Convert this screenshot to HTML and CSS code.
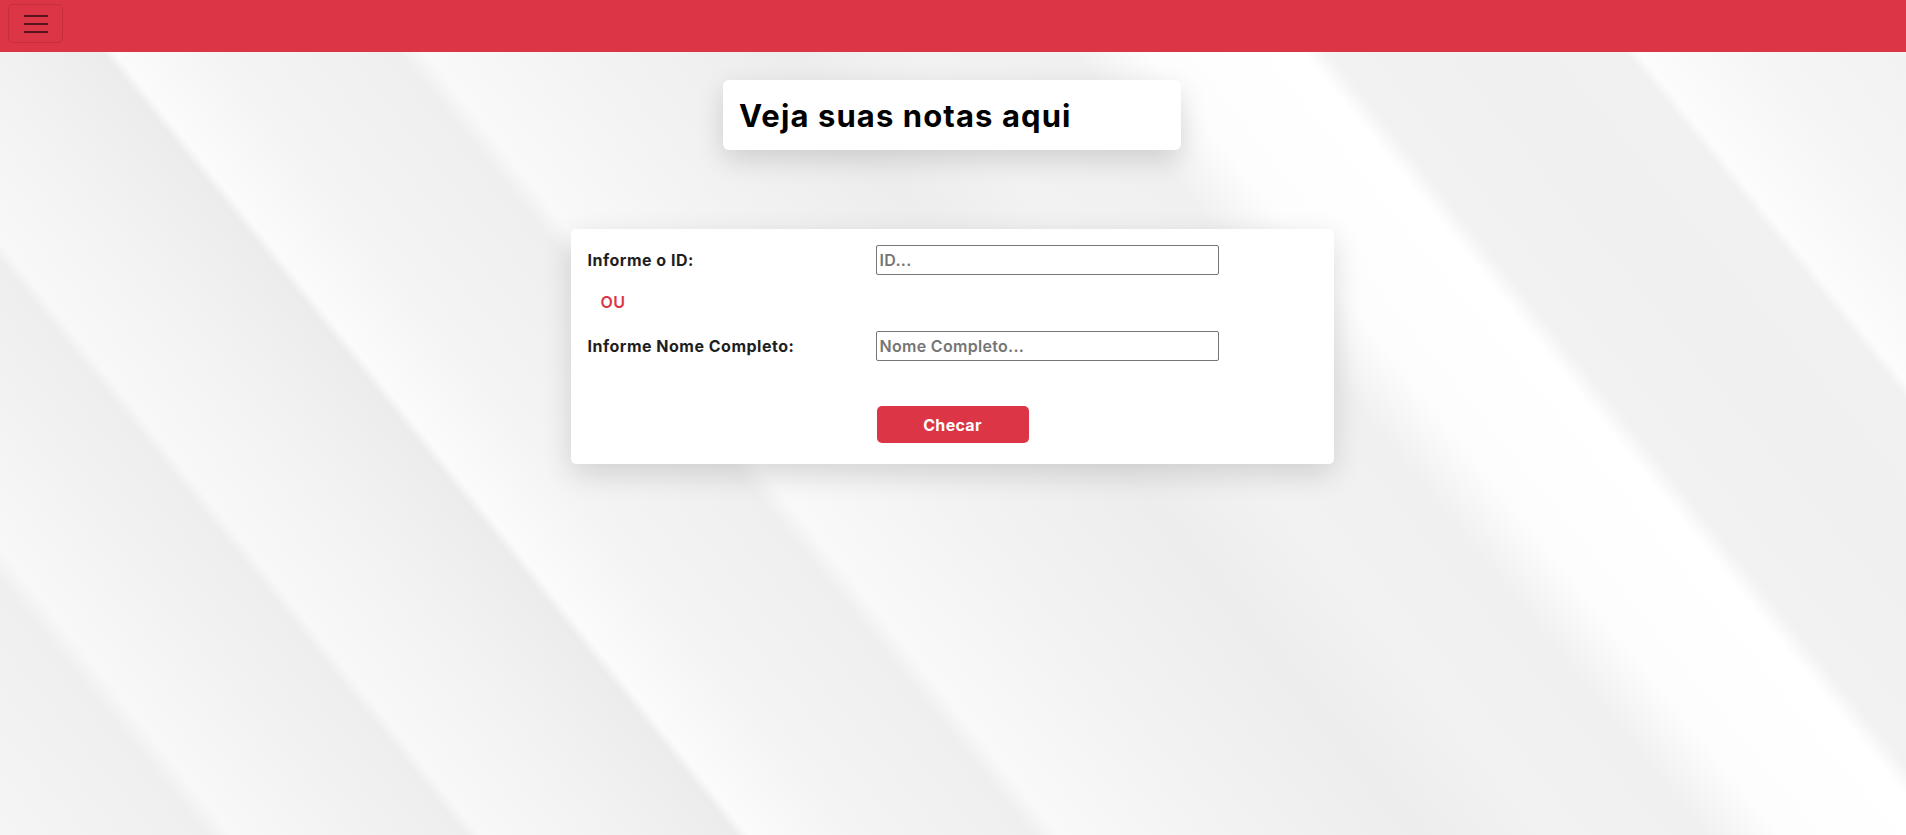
FILE: index.html
```html
<!DOCTYPE html>
<html lang="pt-BR">
<head>
<meta charset="utf-8">
<title>Notas</title>
<link rel="stylesheet" href="styles.css">
</head>
<body>
<nav class="navbar">
  <button class="toggler" type="button" aria-label="Menu">
    <svg class="toggler-icon" width="30" height="30" viewBox="0 0 30 30">
      <path d="M3 7h24M3 15h24M3 23h24" stroke="rgba(0,0,0,0.6)" stroke-width="2" fill="none"/>
    </svg>
  </button>
</nav>
<main class="page">
  <div class="title-card">
    <h1>Veja suas notas aqui</h1>
  </div>
  <form class="form-card">
    <div class="row">
      <label class="label" for="id">Informe o ID:</label>
      <input class="field" id="id" type="text" placeholder="ID...">
    </div>
    <div class="or">OU</div>
    <div class="row">
      <label class="label" for="nome">Informe Nome Completo:</label>
      <input class="field" id="nome" type="text" placeholder="Nome Completo...">
    </div>
    <div class="row actions">
      <span></span>
      <button class="btn" type="button">Checar</button>
    </div>
  </form>
</main>
</body>
</html>
```
FILE: styles.css
```css
* { box-sizing: border-box; }
html, body { margin: 0; }
body {
  font-family: Inter, "Noto Sans", "Liberation Sans", sans-serif;
  color: #212529;
  min-height: 835px;
  background-color: #f3f3f3;
  background-image: linear-gradient(51deg,
    #f5f5f5 0%, #efefef 8%, #f8f8f8 9%, #f2f2f2 14%,
    #eeeeee 18%, #f8f8f8 18.6%, #f2f2f2 24%,
    #ececec 28.5%, #fbfbfb 29%, #f4f4f4 33%,
    #efefef 40%, #f9f9f9 41%, #f3f3f3 47%,
    #ededed 55%, #f2f2f2 60%, #f0f0f0 66%,
    #fdfdfd 69%, #ffffff 75%, #f2f2f2 76%,
    #f0f0f0 82%, #f1f1f1 87.5%, #fcfcfc 88%,
    #f5f5f5 93%, #f1f1f1 100%);
  background-size: 1906px 835px;
  background-repeat: no-repeat;
}
.navbar {
  height: 52px;
  background: #dc3545;
  display: flex;
  align-items: flex-start;
  padding: 4px 8px;
}
.toggler {
  width: 55px;
  height: 39px;
  padding: 0;
  background: transparent;
  border: 1px solid rgba(0,0,0,0.1);
  border-radius: 5px;
  display: flex;
  align-items: center;
  justify-content: center;
}
.toggler-icon { display: block; }
.page {
  display: flex;
  flex-direction: column;
  align-items: center;
  padding-top: 28px;
}
.title-card {
  width: 458px;
  height: 70px;
  background: #fff;
  border-radius: 6px;
  box-shadow: 0 10px 28px rgba(0,0,0,0.14);
  padding: 0 16px;
  display: flex;
  align-items: center;
  transform: translateX(-1px);
}
.title-card h1 {
  margin: 0;
  font-size: 31px;
  font-weight: 700;
  color: #000;
  letter-spacing: 1.1px;
}
.form-card {
  margin-top: 79px;
  width: 763px;
  background: #fff;
  border-radius: 5px;
  box-shadow: 0 10px 30px rgba(0,0,0,0.14);
  padding: 16px 17px 21px;
  display: flex;
  flex-direction: column;
  transform: translateX(-1px);
}
.row {
  display: grid;
  grid-template-columns: 288px 343px;
  align-items: center;
}
.label {
  font-size: 16px;
  font-weight: 700;
  color: #1e1e1e;
  letter-spacing: 0.5px;
}
.field {
  height: 30px;
  border: 1px solid #767676;
  border-radius: 2px;
  padding: 0 3px;
  font-family: inherit;
  font-size: 16px;
  font-weight: 600;
  letter-spacing: 0.3px;
  color: #212529;
  background: #fff;
}
.field::placeholder { color: #757575; }
.or {
  color: #dc3545;
  font-weight: 600;
  font-size: 16px;
  line-height: 18px;
  letter-spacing: 0.5px;
  padding-left: 13px;
  margin: 18px 0 20px;
}
.actions { margin-top: 45px; }
.btn {
  width: 152px;
  height: 37px;
  margin-left: 1px;
  background: #dc3545;
  color: #fff;
  border: 0;
  border-radius: 5px;
  font-family: inherit;
  font-size: 16px;
  font-weight: 700;
  letter-spacing: 0.3px;
}
```
